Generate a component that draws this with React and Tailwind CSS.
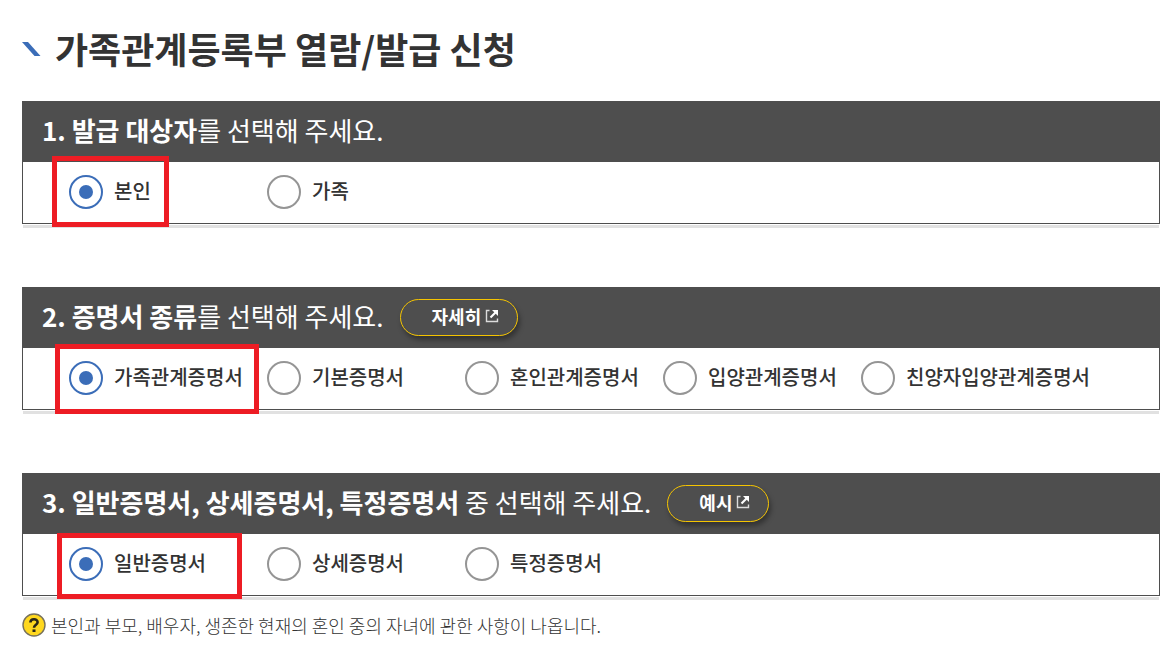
import { useState } from 'react'
import clsx from 'clsx'

const sections = [
  {
    id: 'target',
    strong: '1. 발급 대상자',
    rest: '를 선택해 주세요.',
    options: ['본인', '가족'],
    mark: '-left-[17px] -top-[19px] w-[117px] h-[71px]',
  },
  {
    id: 'type',
    strong: '2. 증명서 종류',
    rest: '를 선택해 주세요.',
    button: '자세히',
    options: ['가족관계증명서', '기본증명서', '혼인관계증명서', '입양관계증명서', '친양자입양관계증명서'],
    mark: '-left-[14px] -top-[17px] w-[204px] h-[70px]',
  },
  {
    id: 'detail',
    strong: '3. 일반증명서, 상세증명서, 특정증명서',
    rest: ' 중 선택해 주세요.',
    button: '예시',
    options: ['일반증명서', '상세증명서', '특정증명서'],
    mark: '-left-[12px] -top-[14px] w-[185px] h-[66px]',
  },
]

const OpenIcon = () => (
  <svg width="14" height="14" viewBox="0 0 14 14" fill="none" stroke="currentColor" aria-hidden="true">
    <path d="M4.5 1.5H1.5V12.5H12.5V9.5" stroke="#dcdcdc" strokeWidth="1.4" />
    <path d="M5.5 8.5L10.5 3.5" strokeWidth="2.2" />
    <path d="M7 1H13V7Z" fill="currentColor" stroke="none" />
  </svg>
)

const Section = ({ section }) => {
  const [selected, setSelected] = useState(section.options[0])

  return (
    <section>
      <div className="border border-t-0 border-[#4e4e4e]">
        <div className="-mx-px flex h-[61px] items-center bg-[#4e4e4e] pl-5 text-white">
          <h2 id={section.id} className="pb-1 text-[26px] leading-9 whitespace-pre">
            <strong className="font-bold">{section.strong}</strong>
            {section.rest}
          </h2>
          {section.button && (
            <button
              type="button"
              className="ml-4 flex h-[37px] items-center gap-1 rounded-full border border-[#f5c400] pr-[18px] pb-[3px] pl-[31px] text-[18px] leading-6 font-bold shadow-[2px_4px_5px_rgba(0,0,0,0.35)]"
            >
              {section.button}
              <OpenIcon />
            </button>
          )}
        </div>
        <div role="radiogroup" aria-labelledby={section.id} className="flex pt-[13px] pb-[14px] pl-[46px]">
          {section.options.map((option, idx) => (
            <label key={option} className="relative flex w-[198px] items-center gap-[11px] whitespace-nowrap">
              <input
                type="radio"
                name={section.id}
                checked={selected === option}
                onChange={() => setSelected(option)}
                className="flex size-[34px] shrink-0 appearance-none items-center justify-center rounded-full border-2 border-[#959595] bg-white checked:border-[#3b6db8] checked:before:size-[14px] checked:before:rounded-full checked:before:bg-[#3b6db8] checked:before:content-['']"
              />
              <span className="pb-0.5 text-[20px] leading-7 font-medium text-[#333]">{option}</span>
              {idx === 0 && (
                <span className={clsx('pointer-events-none absolute border-5 border-[#ed1c24]', section.mark)} />
              )}
            </label>
          ))}
        </div>
      </div>
      <div className="mx-px mt-px h-[3px] bg-[#e1e1e1]" />
    </section>
  )
}

export default function App() {
  return (
    <main className="bg-white pt-[26px] pr-[10px] pb-4 pl-[22px] font-['Noto_Sans_CJK_KR',sans-serif] text-[#333]">
      <header className="mb-[30px] flex items-center gap-[14px]">
        <svg width="19" height="16" viewBox="0 0 19 16" aria-hidden="true">
          <path d="M0 1H6L18.5 15H12.5Z" fill="#3b6db8" />
        </svg>
        <h1 className="text-[36px] leading-[45px] font-bold">가족관계등록부 열람/발급 신청</h1>
      </header>

      <div className="flex flex-col gap-[59px]">
        {sections.map((section) => (
          <Section key={section.id} section={section} />
        ))}
      </div>

      <div className="mt-[13px] flex items-center gap-[5px]">
        <svg width="24" height="24" viewBox="0 0 24 24" fill="none" aria-hidden="true">
          <circle cx="12" cy="12" r="11" fill="#ffd81f" stroke="#77715c" strokeWidth="1.4" />
          <path d="M8.4 9.6C8.4 5.2 15.6 5.2 15.6 9.2C15.6 11.8 12 11.6 12 14.8" stroke="#2b2718" strokeWidth="2.6" />
          <path d="M10.5 16.4H13.5V19H10.5Z" fill="#2b2718" />
        </svg>
        <p className="text-[18px] leading-6 font-light">
          본인과 부모, 배우자, 생존한 현재의 혼인 중의 자녀에 관한 사항이 나옵니다.
        </p>
      </div>
    </main>
  )
}
